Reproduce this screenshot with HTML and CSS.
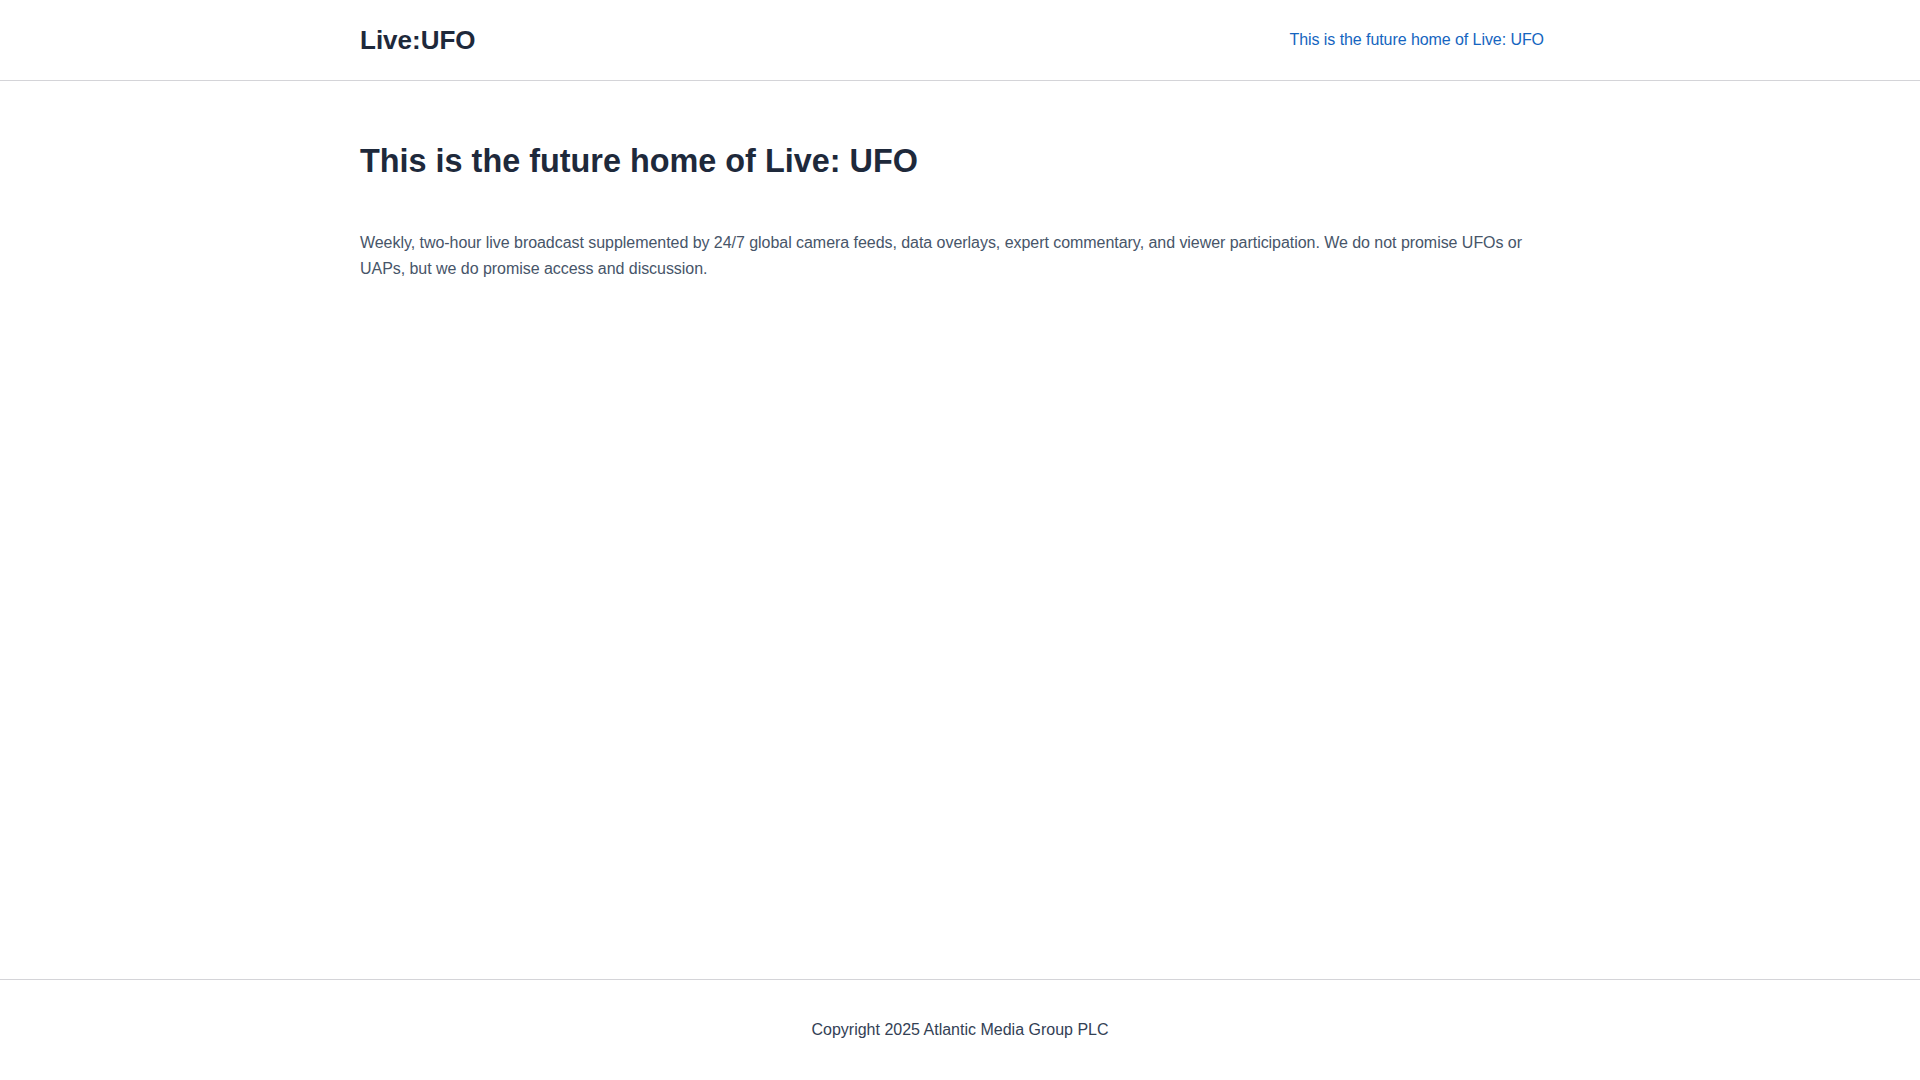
FILE: index.html
```html
<!DOCTYPE html>
<html lang="en">
<head>
<meta charset="utf-8">
<title>Live:UFO</title>
<link rel="stylesheet" href="styles.css">
</head>
<body>
<header class="site-header">
  <div class="container header-inner">
    <a class="logo" href="#">Live:UFO</a>
    <nav class="nav">
      <a class="nav-link" href="#">This is the future home of Live: UFO</a>
    </nav>
  </div>
</header>
<main class="main">
  <div class="container">
    <h1 class="title">This is the future home of Live: UFO</h1>
    <p class="lead">Weekly, two-hour live broadcast supplemented by 24/7 global camera feeds, data overlays, expert commentary, and viewer participation. We do not promise UFOs or UAPs, but we do promise access and discussion.</p>
  </div>
</main>
<footer class="site-footer">
  <div class="container footer-inner">Copyright 2025 Atlantic Media Group PLC</div>
</footer>
</body>
</html>
```

FILE: styles.css
```css
* { box-sizing: border-box; }
html, body { margin: 0; padding: 0; }
body {
  font-family: "Liberation Sans", Arial, sans-serif;
  color: #1e293b;
  background: #ffffff;
  min-height: 100vh;
  display: flex;
  flex-direction: column;
}
.container {
  width: 1200px;
  margin: 0 auto;
}
.site-header {
  border-bottom: 1px solid #d4d4d8;
}
.header-inner {
  height: 80px;
  display: flex;
  align-items: center;
  justify-content: space-between;
}
.logo {
  font-size: 26px;
  line-height: 32px;
  font-weight: 700;
  color: #1e293b;
  text-decoration: none;
}
.nav-link {
  display: block;
  font-size: 16px;
  line-height: 24px;
  color: #1565c0;
  text-decoration: none;
  padding: 0 16px;
  letter-spacing: -0.07px;
}
.main {
  flex: 1;
  padding-top: 60px;
}
.title {
  margin: 0;
  font-size: 32.4px;
  line-height: 40px;
  font-weight: 700;
  color: #1e293b;
}
.lead {
  margin: 49px 0 0;
  font-size: 16px;
  line-height: 26px;
  color: #475569;
  letter-spacing: -0.045px;
}
.site-footer {
  border-top: 1px solid #d4d4d8;
  padding: 38px 0 38px;
}
.footer-inner {
  text-align: center;
  font-size: 16px;
  line-height: 24px;
  color: #334155;
}
```
